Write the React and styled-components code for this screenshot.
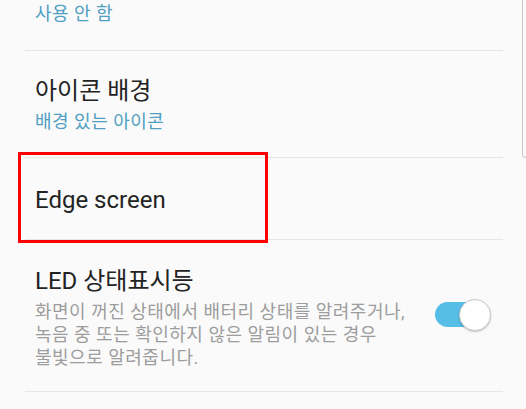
import React from "react";
import styled, { createGlobalStyle } from "styled-components";

const Global = createGlobalStyle`
  html, body { margin: 0; padding: 0; background: #fafafa; }
  body { font-family: "Roboto", "Noto Sans CJK KR", sans-serif; }
`;

const Screen = styled.div`
  position: relative;
  width: 526px;
  height: 409px;
  overflow: hidden;
  background: #fafafa;
  box-sizing: border-box;
  padding: 0 23px 0 25px;
`;

const List = styled.div`
  display: flex;
  flex-direction: column;
`;

const Item = styled.div`
  display: flex;
  align-items: center;
  gap: 16px;
  padding: ${(p) => p.$pad || "25px 12px 24px 10px"};
  border-bottom: 1px solid #e5e5e5;
`;

const TextCol = styled.div`
  flex: 1;
  display: flex;
  flex-direction: column;
  min-width: 0;
`;

const Title = styled.div`
  font-family: "Roboto", "Noto Sans CJK KR", sans-serif;
  font-size: 24px;
  line-height: 30px;
  color: #232323;
`;

const Sub = styled.div`
  font-family: "Roboto", "Noto Sans CJK KR", sans-serif;
  font-size: 18px;
  line-height: 23px;
  letter-spacing: 0.5px;
  color: #4f9fc2;
  margin-top: ${(p) => p.$gap || 0}px;
`;

const Desc = styled.div`
  font-family: "Roboto", "Noto Sans CJK KR", sans-serif;
  font-size: 18px;
  line-height: 23px;
  letter-spacing: 0.5px;
  color: #9d9d9d;
  margin-top: 4px;
`;

const Toggle = styled.div`
  position: relative;
  flex: none;
  width: 56px;
  height: 33px;
  margin-bottom: 4px;
`;

const Track = styled.div`
  position: absolute;
  left: 0;
  top: 3px;
  width: 50px;
  height: 25px;
  border-radius: 13px;
  background: #56bde6;
`;

const Thumb = styled.div`
  position: absolute;
  right: 0;
  top: 0;
  width: 30px;
  height: 30px;
  border-radius: 50%;
  background: #ffffff;
  border: 1px solid #c9c9c9;
  box-shadow: 0 1px 2px rgba(0, 0, 0, 0.22);
`;

const Highlight = styled.div`
  position: absolute;
  left: 18px;
  top: 152px;
  width: 250px;
  height: 91px;
  box-sizing: border-box;
  border: 3px solid #ff0000;
  pointer-events: none;
`;

const EdgeLine = styled.div`
  position: absolute;
  right: 0;
  top: 0;
  width: 3px;
  height: 157px;
  border-left: 1px solid #c6c6c6;
  border-bottom: 1px solid #c6c6c6;
  border-bottom-left-radius: 4px;
`;

export default function App() {
  return (
    <>
      <Global />
      <Screen>
        <List>
          <Item $pad="2px 12px 25px 10px">
            <TextCol>
              <Sub>사용 안 함</Sub>
            </TextCol>
          </Item>
          <Item $pad="25px 12px 24px 10px">
            <TextCol>
              <Title>아이콘 배경</Title>
              <Sub $gap={4}>배경 있는 아이콘</Sub>
            </TextCol>
          </Item>
          <Item $pad="27px 12px 24px 10px">
            <TextCol>
              <Title>Edge screen</Title>
            </TextCol>
          </Item>
          <Item $pad="26px 12px 22px 10px">
            <TextCol>
              <Title>LED 상태표시등</Title>
              <Desc>
                화면이 꺼진 상태에서 배터리 상태를 알려주거나,
                <br />
                녹음 중 또는 확인하지 않은 알림이 있는 경우
                <br />
                불빛으로 알려줍니다.
              </Desc>
            </TextCol>
            <Toggle>
              <Track />
              <Thumb />
            </Toggle>
          </Item>
        </List>
        <Highlight />
        <EdgeLine />
      </Screen>
    </>
  );
}
